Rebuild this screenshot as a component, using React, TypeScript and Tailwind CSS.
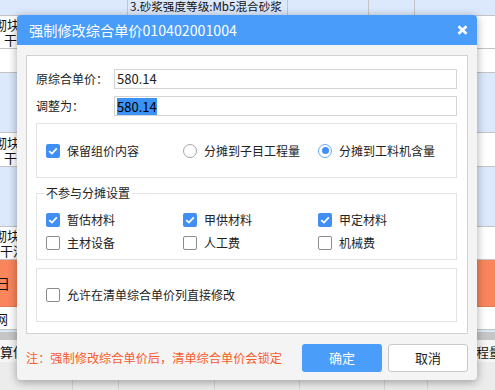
import React from "react";

const Check = ({ checked }: { checked: boolean }) =>
  checked ? (
    <span className="flex h-[14px] w-[14px] shrink-0 items-center justify-center rounded-[2px] bg-[#3f8ff6]">
      <svg width="10" height="8" viewBox="0 0 10 8">
        <path d="M1.2 4.1 L3.9 6.6 L8.8 1.3" fill="none" stroke="white" strokeWidth="1.8" />
      </svg>
    </span>
  ) : (
    <span className="h-[14px] w-[14px] shrink-0 rounded-[2px] border border-[#8c8c8c] bg-white" />
  );

const Radio = ({ checked }: { checked: boolean }) =>
  checked ? (
    <span className="flex h-[14px] w-[14px] shrink-0 items-center justify-center rounded-full border border-[#6aa8f7] bg-white">
      <span className="h-[7px] w-[7px] rounded-full bg-[#3f8ff6]" />
    </span>
  ) : (
    <span className="h-[14px] w-[14px] shrink-0 rounded-full border border-[#a6a6a6] bg-white" />
  );

const Item = ({ children, box }: { children: React.ReactNode; box: React.ReactNode }) => (
  <div className="flex items-center gap-[7px]">
    {box}
    <span className="whitespace-nowrap text-[12px] leading-[16px] text-[#222]">{children}</span>
  </div>
);

const Edge = ({ children, cls }: { children: React.ReactNode; cls: string }) => (
  <div className="w-[17px] overflow-hidden whitespace-nowrap">
    <div className={cls}>{children}</div>
  </div>
);

export default function App() {
  return (
    <div className="relative h-[390px] w-[495px] overflow-hidden bg-white font-['Noto_Sans_CJK_SC','Noto_Sans',sans-serif] text-[#222]">
      {/* background spreadsheet */}
      <div className="flex flex-col text-[13px] leading-[15px] text-[#111]">
        <div className="flex h-[16px] border-b border-[#c4c4c4] bg-[#dce8fb]">
          <div className="w-[127px]" />
          <div className="w-[160px] whitespace-nowrap border-l border-[#c4c4c4] pl-[2px] text-[11.6px] leading-[12px]">
            3.砂浆强度等级:Mb5混合砂浆
          </div>
          <div className="w-[81px] border-l border-[#c4c4c4]" />
          <div className="w-[46px] border-l border-[#c4c4c4]" />
          <div className="flex-1 border-l border-[#c4c4c4]" />
        </div>
        <div className="flex h-[33px] flex-col justify-center border-b border-[#c4c4c4] bg-white">
          <Edge cls="ml-[-6px]">砌块</Edge>
          <Edge cls="ml-[4px]">干混</Edge>
        </div>
        <div className="h-[24px] border-b border-[#c4c4c4] bg-white" />
        <div className="h-[60px] border-b border-[#c4c4c4] bg-[#dce8fb]" />
        <div className="flex h-[34px] flex-col justify-center border-b border-[#c4c4c4] bg-white">
          <Edge cls="ml-[-6px]">砌块</Edge>
          <Edge cls="ml-[4px]">干混</Edge>
        </div>
        <div className="h-[60px] border-b border-[#c4c4c4] bg-[#dce8fb]" />
        <div className="flex h-[33px] flex-col justify-center border-b border-[#c4c4c4] bg-white">
          <Edge cls="ml-[-6px]">砌块</Edge>
          <Edge cls="ml-[0px]">干混</Edge>
        </div>
        <div className="flex h-[47px] items-center border-b border-[#e07a55] bg-[#f8855c]">
          <Edge cls="ml-[-4px] text-[14px]">日</Edge>
        </div>
        <div className="flex h-[23px] items-center border-b border-[#c4c4c4] bg-white">
          <Edge cls="ml-[-5px]">网</Edge>
        </div>
        <div className="h-[10px] border-t-[2px] border-[#dce6f5] bg-[#c6c6c6]" />
        <div className="flex h-[22px] items-center justify-between bg-[#f6f6f6]">
          <Edge cls="">算信</Edge>
          <div className="w-[18px] overflow-hidden whitespace-nowrap">
            <div className="ml-[-1px]">程量</div>
          </div>
        </div>
        <div className="flex h-[28px] bg-[#ececec]">
          <div className="w-[73px] border-r border-[#d6d6d6]" />
          <div className="w-[46px] border-r border-[#d6d6d6]" />
          <div className="w-[96px] border-r border-[#d6d6d6]" />
          <div className="w-[85px] border-r border-[#d6d6d6]" />
          <div className="w-[85px] border-r border-[#d6d6d6]" />
          <div className="w-[43px] border-r border-[#d6d6d6]" />
          <div className="flex-1" />
        </div>
      </div>

      {/* dialog */}
      <div className="absolute left-[17px] top-[15px] flex h-[365px] w-[460px] flex-col rounded-[4px] bg-[#f4f4f4] shadow-[0_2px_10px_rgba(0,0,0,0.35)]">
        <div className="flex h-[30px] items-center justify-between rounded-t-[4px] bg-[#499cfa] pl-[12px] pr-[9px]">
          <span className="text-[14.2px] leading-[18px] text-white">强制修改综合单价010402001004</span>
          <svg width="11" height="10" viewBox="0 0 11 10">
            <path d="M1.5 1.2 L9.5 8.8 M9.5 1.2 L1.5 8.8" stroke="white" strokeWidth="2.6" />
          </svg>
        </div>
        <div className="flex flex-col px-[9px] pt-[10px]">
          <div className="flex flex-col border border-[#d2d2d2] bg-white pb-[11px] pl-[9px] pr-[10px] pt-[13px]">
            <div className="flex h-[20px] items-center">
              <span className="w-[78px] text-[12px] leading-[16px]">原综合单价：</span>
              <div className="flex h-[20px] flex-1 items-center border border-[#d5d5d5] bg-white pl-[2px]">
                <span className="text-[13px] leading-[16px]">580.14</span>
              </div>
            </div>
            <div className="mt-[7px] flex h-[20px] items-center">
              <span className="w-[78px] text-[12px] leading-[16px]">调整为：</span>
              <div className="flex h-[20px] flex-1 items-center border border-[#d5d5d5] bg-white pl-[2px]">
                <span className="bg-[#3b93f5] text-[13px] leading-[17px] text-black">580.14</span>
              </div>
            </div>
            <div className="mt-[7px] grid h-[55px] grid-cols-[137px_135px_1fr] items-center border border-[#e3e3e3] pl-[9px]">
              <Item box={<Check checked />}>保留组价内容</Item>
              <Item box={<Radio checked={false} />}>分摊到子目工程量</Item>
              <Item box={<Radio checked />}>分摊到工料机含量</Item>
            </div>
            <div className="relative mt-[15px] flex h-[67px] flex-col gap-[7px] border border-[#e3e3e3] pl-[9px] pt-[18px]">
              <span className="absolute left-[7px] top-[-9px] bg-white px-[2px] text-[12px] leading-[16px]">
                不参与分摊设置
              </span>
              <div className="grid h-[16px] grid-cols-[137px_135px_1fr] items-center">
                <Item box={<Check checked />}>暂估材料</Item>
                <Item box={<Check checked />}>甲供材料</Item>
                <Item box={<Check checked />}>甲定材料</Item>
              </div>
              <div className="grid h-[16px] grid-cols-[137px_135px_1fr] items-center">
                <Item box={<Check checked={false} />}>主材设备</Item>
                <Item box={<Check checked={false} />}>人工费</Item>
                <Item box={<Check checked={false} />}>机械费</Item>
              </div>
            </div>
            <div className="mt-[8px] flex h-[54px] items-center border border-[#e3e3e3] pl-[9px]">
              <Item box={<Check checked={false} />}>允许在清单综合单价列直接修改</Item>
            </div>
          </div>
          <div className="mt-[10px] flex items-center justify-between">
            <span className="whitespace-nowrap text-[12.2px] leading-[16px] text-[#fa5b29]">注：强制修改综合单价后，清单综合单价会锁定</span>
            <div className="flex gap-[6px]">
              <div className="flex h-[28px] w-[80px] items-center justify-center rounded-[3px] bg-[#4a9df9] text-[13px] text-white">
                确定
              </div>
              <div className="flex h-[28px] w-[80px] items-center justify-center rounded-[3px] border border-[#c8c8c8] bg-white text-[13px] text-[#222]">
                取消
              </div>
            </div>
          </div>
        </div>
      </div>
    </div>
  );
}
